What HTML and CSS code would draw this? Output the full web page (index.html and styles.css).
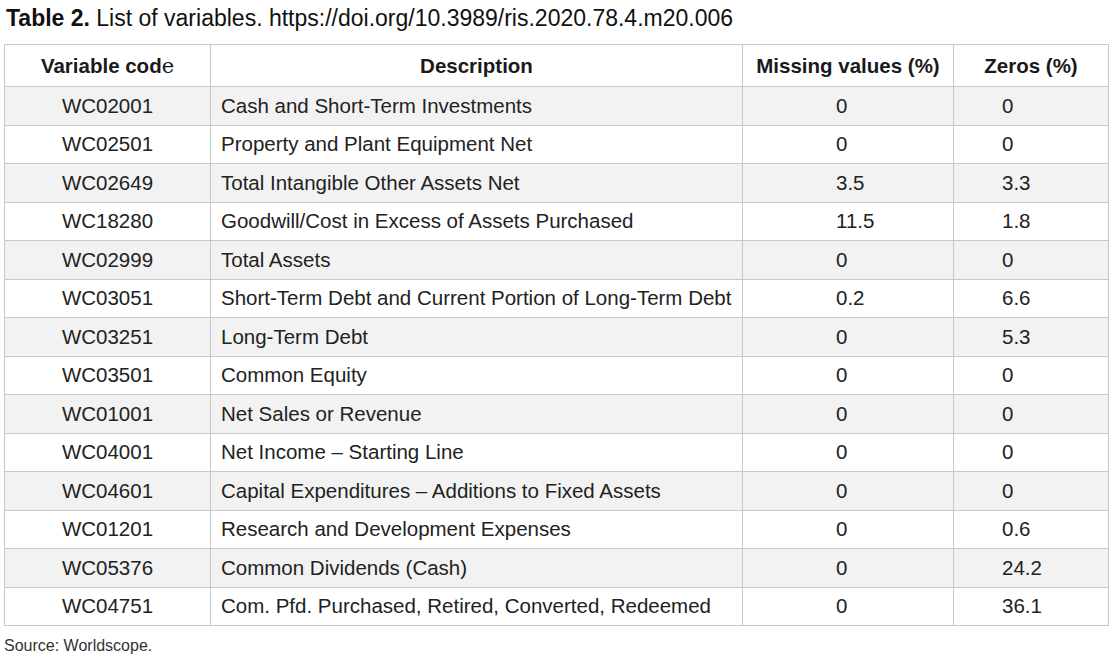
FILE: index.html
```html
<!DOCTYPE html>
<html>
<head>
<meta charset="utf-8">
<title>Table 2</title>
<link rel="stylesheet" href="styles.css">
</head>
<body>
<div class="page">
  <h2 class="title"><b>Table 2.</b> List of variables. https://doi.org/10.3989/ris.2020.78.4.m20.006</h2>
  <table class="vars">
    <colgroup>
      <col class="c1"><col class="c2"><col class="c3"><col class="c4">
    </colgroup>
    <thead>
      <tr>
        <th>Variable cod<span class="odd-e">e</span></th>
        <th>Description</th>
        <th>Missing values (%)</th>
        <th>Zeros (%)</th>
      </tr>
    </thead>
    <tbody>
      <tr><td class="code">WC02001</td><td class="desc">Cash and Short-Term Investments</td><td class="miss">0</td><td class="zero">0</td></tr>
      <tr><td class="code">WC02501</td><td class="desc">Property and Plant Equipment Net</td><td class="miss">0</td><td class="zero">0</td></tr>
      <tr><td class="code">WC02649</td><td class="desc">Total Intangible Other Assets Net</td><td class="miss">3.5</td><td class="zero">3.3</td></tr>
      <tr><td class="code">WC18280</td><td class="desc">Goodwill/Cost in Excess of Assets Purchased</td><td class="miss">11.5</td><td class="zero">1.8</td></tr>
      <tr><td class="code">WC02999</td><td class="desc">Total Assets</td><td class="miss">0</td><td class="zero">0</td></tr>
      <tr><td class="code">WC03051</td><td class="desc">Short-Term Debt and Current Portion of Long-Term Debt</td><td class="miss">0.2</td><td class="zero">6.6</td></tr>
      <tr><td class="code">WC03251</td><td class="desc">Long-Term Debt</td><td class="miss">0</td><td class="zero">5.3</td></tr>
      <tr><td class="code">WC03501</td><td class="desc">Common Equity</td><td class="miss">0</td><td class="zero">0</td></tr>
      <tr><td class="code">WC01001</td><td class="desc">Net Sales or Revenue</td><td class="miss">0</td><td class="zero">0</td></tr>
      <tr><td class="code">WC04001</td><td class="desc">Net Income – Starting Line</td><td class="miss">0</td><td class="zero">0</td></tr>
      <tr><td class="code">WC04601</td><td class="desc">Capital Expenditures – Additions to Fixed Assets</td><td class="miss">0</td><td class="zero">0</td></tr>
      <tr><td class="code">WC01201</td><td class="desc">Research and Development Expenses</td><td class="miss">0</td><td class="zero">0.6</td></tr>
      <tr><td class="code">WC05376</td><td class="desc">Common Dividends (Cash)</td><td class="miss">0</td><td class="zero">24.2</td></tr>
      <tr><td class="code">WC04751</td><td class="desc">Com. Pfd. Purchased, Retired, Converted, Redeemed</td><td class="miss">0</td><td class="zero">36.1</td></tr>
    </tbody>
  </table>
  <p class="source">Source: Worldscope.</p>
</div>
</body>
</html>
```

FILE: styles.css
```css
html, body {
  margin: 0;
  padding: 0;
  background: #ffffff;
}

.page {
  padding: 0 4px;
  font-family: "Liberation Sans", Arial, sans-serif;
  color: #222222;
}

.title {
  margin: 0 0 8px 0;
  padding-left: 2px;
  font-size: 23px;
  line-height: 36px;
  font-weight: normal;
  color: #111111;
  white-space: nowrap;
}

.title b {
  font-weight: bold;
}

.vars {
  border-collapse: collapse;
  table-layout: fixed;
  width: 1104px;
  font-size: 20.5px;
}

.c1 { width: 206px; }
.c2 { width: 532px; }
.c3 { width: 211px; }
.c4 { width: 155px; }

.vars th,
.vars td {
  border: 1px solid #c8c8c8;
  padding: 0;
  vertical-align: middle;
  white-space: nowrap;
}

.vars th {
  height: 41px;
  font-weight: bold;
  text-align: center;
  color: #1a1a1a;
  background: #ffffff;
}

.odd-e {
  font-family: "DejaVu Serif", "Liberation Serif", serif;
  font-weight: normal;
  font-size: 21px;
}

.vars td {
  height: 37.5px;
}

.vars tbody tr:nth-child(odd) td {
  background: #f2f2f2;
}

.code {
  text-align: center;
}

.desc {
  padding-left: 10px !important;
  text-align: left;
}

.miss {
  padding-left: 93px !important;
  text-align: left;
}

.zero {
  padding-left: 48px !important;
  text-align: left;
}

.source {
  margin: 10px 0 0 0;
  font-size: 16px;
  line-height: 20px;
  color: #333333;
}
```
